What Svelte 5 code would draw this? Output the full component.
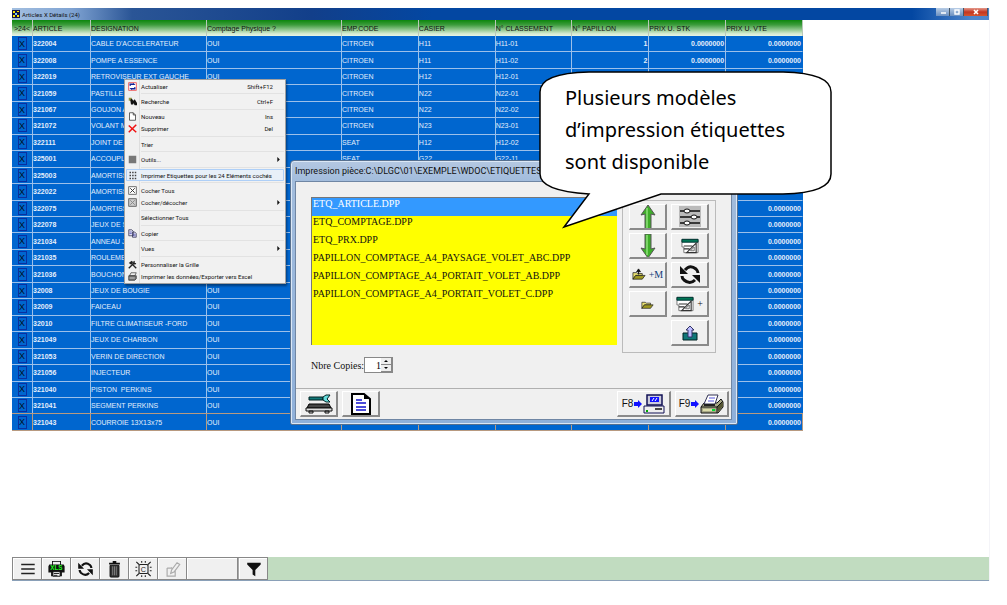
<script>
	let copies = 1;
	let selected = 'ETQ_ARTICLE.DPP';

	const columns = [
		'ARTICLE',
		'DESIGNATION',
		'Comptage Physique ?',
		'EMP.CODE',
		'CASIER',
		'N° CLASSEMENT',
		'N° PAPILLON',
		'PRIX U. STK',
		'PRIX U. VTE'
	];

	const zero = '0.0000000';

	// code, designation, emplacement, casier, classement, papillon, prix stk, prix vte
	const articles = [
		['322004', "CABLE D'ACCELERATEUR", 'CITROEN', 'H11', 'H11-01', '1', zero, zero],
		['322008', 'POMPE A ESSENCE', 'CITROEN', 'H11', 'H11-02', '2', zero, zero],
		['322019', 'RETROVISEUR EXT GAUCHE', 'CITROEN', 'H12', 'H12-01'],
		['321059', 'PASTILLE', 'CITROEN', 'N22', 'N22-01'],
		['321067', 'GOUJON A', 'CITROEN', 'N22', 'N22-02'],
		['321072', 'VOLANT M', 'CITROEN', 'N23', 'N23-01'],
		['322111', 'JOINT DE C', 'SEAT', 'H12', 'H12-02'],
		['325001', 'ACCOUPLE', 'SEAT', 'G22', 'G22-11'],
		['325003', 'AMORTISS'],
		['322022', 'AMORTISS'],
		['322075', 'AMORTISS', '', '', '', '', '', zero],
		['322078', 'JEUX DE S', '', '', '', '', '', zero],
		['321034', 'ANNEAU J', '', '', '', '', '', zero],
		['321035', 'ROULEME', '', '', '', '', '', zero],
		['321036', 'BOUCHON', '', '', '', '', '', zero],
		['32008', 'JEUX DE BOUGIE', '', '', '', '', '', zero],
		['32009', 'FAICEAU', '', '', '', '', '', zero],
		['32010', 'FILTRE CLIMATISEUR -FORD', '', '', '', '', '', zero],
		['321049', 'JEUX DE CHARBON', '', '', '', '', '', zero],
		['321053', 'VERIN DE DIRECTION', '', '', '', '', '', zero],
		['321056', 'INJECTEUR', '', '', '', '', '', zero],
		['321040', 'PISTON  PERKINS', '', '', '', '', '', zero],
		['321041', 'SEGMENT PERKINS', '', '', '', '', '', zero],
		['321043', 'COURROIE 13X13x75', '', '', '', '', '', zero]
	];

	const menu = [
		{ label: 'Actualiser', key: 'Shift+F12', icon: 'refresh', sep: true },
		{ label: 'Recherche', key: 'Ctrl+F', icon: 'find', sep: true },
		{ label: 'Nouveau', key: 'Ins', icon: 'new' },
		{ label: 'Supprimer', key: 'Del', icon: 'delete', sep: true },
		{ label: 'Trier', sep: true },
		{ label: 'Outils...', icon: 'tools', sub: true, sep: true },
		{ label: 'Imprimer Etiquettes pour les 24 Eléments cochés', icon: 'grid', active: true, sep: true },
		{ label: 'Cocher Tous', icon: 'check' },
		{ label: 'Cocher/décocher', icon: 'toggle', sub: true, sep: true },
		{ label: 'Sélectionner Tous', sep: true },
		{ label: 'Copier', icon: 'copy', sep: true },
		{ label: 'Vues', sub: true, sep: true },
		{ label: 'Personnaliser la Grille', icon: 'custom' },
		{ label: 'Imprimer les données/Exporter vers Excel', icon: 'print' }
	];

	const files = [
		'ETQ_ARTICLE.DPP',
		'ETQ_COMPTAGE.DPP',
		'ETQ_PRX.DPP',
		'PAPILLON_COMPTAGE_A4_PAYSAGE_VOLET_ABC.DPP',
		'PAPILLON_COMPTAGE_A4_PORTAIT_VOLET_AB.DPP',
		'PAPILLON_COMPTAGE_A4_PORTAIT_VOLET_C.DPP'
	];
</script>

{#snippet folder()}
	<path d="M1 4h4l1 1h5v2H4l-3 4z" fill="#e8e070" stroke="#222" stroke-width=".8" />
	<path d="M4 7h10l-3 4H1z" fill="#a09a20" stroke="#222" stroke-width=".8" />
{/snippet}

{#snippet design()}
	<path d="M1 1h17v14H3V9H1z" fill="#fff" stroke="#777" stroke-width="1" />
	<path d="M1 1h17v3H1z" fill="#075" stroke="#033" stroke-width="1" />
	<path d="M3 8h9M3 11h6M16 5v10H6z" fill="none" stroke="#333" stroke-width="1.2" />
	<path d="M14 9v4h-4z" fill="#eee" stroke="#555" stroke-width=".8" />
{/snippet}

{#snippet cycle()}
	<path d="M6 6q5-6 11-1 2 2 2 4M16 16q-5 5-11 0-2-2-2-4" fill="none" stroke="#111" stroke-width="3" />
	<path d="M1 2v8h8zM21 19v-8h-8z" fill="#111" />
{/snippet}

<main>
	<section class="window">
		<header class="titlebar">
			<svg class="app-icon" viewBox="0 0 8 8">
				<rect width="8" height="8" fill="#114" />
				<path d="M1 1h2v2H1zM5 1h2v1H5zM1 5h2v2H1zM5 5h2v2H5z" fill="#ffe600" />
				<path d="M3 3h2v2H3z" fill="#7cf" />
			</svg>
			<h1>Articles X Détails (24)</h1>
			<div class="win-buttons">
				<button aria-label="Réduire"><svg viewBox="0 0 8 6"><path d="M2 4h5" stroke="#fff" stroke-width="1.5" /></svg></button>
				<button aria-label="Agrandir"><svg viewBox="0 0 8 6"><path d="M2 1h4v4H2z" fill="none" stroke="#fff" stroke-width="1.4" /></svg></button>
				<button class="close" aria-label="Fermer"><svg viewBox="0 0 8 6"><path d="M2 1l4 4M6 1L2 5" stroke="#fff" stroke-width="1.6" /></svg></button>
			</div>
		</header>

		<table>
			<colgroup>
				<col class="c-check" /><col class="c-art" /><col class="c-des" /><col class="c-phy" />
				<col /><col /><col /><col /><col /><col />
			</colgroup>
			<thead>
				<tr>
					<th class="count">&gt;24&lt;</th>
					{#each columns as column}
						<th>{column}</th>
					{/each}
				</tr>
			</thead>
			<tbody>
				{#each articles as [code, name, emp, casier, rank, papillon, stk, vte] (code)}
					<tr>
						<td class="tick"><input type="checkbox" checked aria-label={code} /></td>
						<td><b>{code}</b></td>
						<td>{name}</td>
						<td>OUI</td>
						<td>{emp ?? ''}</td>
						<td>{casier ?? ''}</td>
						<td>{rank ?? ''}</td>
						<td class="num">{papillon ?? ''}</td>
						<td class="num">{stk ?? ''}</td>
						<td class="num">{vte ?? ''}</td>
					</tr>
				{/each}
			</tbody>
		</table>

		<footer class="toolbar">
			<div class="tools">
				<button aria-label="Menu"><svg viewBox="0 0 20 20"><path d="M3 5h15M3 10h15M3 15h15" stroke="#222" stroke-width="1.4" /></svg></button>
				<button aria-label="Export XLS">
					<svg viewBox="0 0 20 20">
						<path d="M5 1h10v4h3l1 2v7h-3v4H4v-4H1V7l1-2h3z" fill="#111" />
						<path d="M6 2h8v3H6z" fill="#eee" />
						<path d="M6 13h8v5H6z" fill="#fff" stroke="#111" /><path d="M7 15h6M7 17h4" stroke="#111" />
						<text x="3" y="11" font-size="7" font-weight="bold" fill="#2f2">XLS</text>
					</svg>
				</button>
				<button aria-label="Rafraîchir"><svg viewBox="-2 -1 26 23">{@render cycle()}</svg></button>
				<button aria-label="Supprimer">
					<svg viewBox="0 0 20 20">
						<path d="M5 6h10v12q0 1-1 1H6q-1 0-1-1z" fill="#333" stroke="#111" /><path d="M4 4h12M8 2h4" stroke="#111" stroke-width="2" />
						<path d="M8 7v10M10 7v10M12 7v10" stroke="#999" stroke-width=".8" />
					</svg>
				</button>
				<button aria-label="Code">
					<svg viewBox="0 0 20 20">
						<path d="M6 5h8l1 1v8l-1 1H6l-1-1V6zM2 2l3 3M18 2l-3 3M2 18l3-3M18 18l-3-3M8 1v2M12 1v2M8 17v2M12 17v2M1 8h2M1 12h2M17 8h2M17 12h2" fill="none" stroke="#222" stroke-width="1.2" />
						<text x="7" y="13" font-size="8" fill="#222">C</text>
					</svg>
				</button>
				<button aria-label="Modifier" disabled><svg viewBox="0 0 20 20"><path d="M4 9h5v-1M4 9v9h9v-6M8 15l1-4 6-8 3 2-6 8z" fill="none" stroke="#aaa" stroke-width="1.3" /></svg></button>
				<span class="blank"></span>
				<button class="filter" aria-label="Filtrer"><svg viewBox="0 0 20 20"><path d="M3 3h15v2l-6 6v7l-3-2v-5L3 5z" fill="#111" /></svg></button>
			</div>
		</footer>
	</section>

	<menu class="context">
		{#each menu as item (item.label)}
			<li class:active={item.active}>
				<button>
					<svg class="menu-icon" viewBox="0 0 12 12">
						{#if item.icon === 'refresh'}
							<rect x="1" y="1" width="10" height="10" fill="#fff" stroke="#e33" />
							<path d="M3 5V3h5M9 7v2H4" fill="none" stroke="#129" stroke-width="2" /><path d="M7 1l3 3H7zM5 11L2 8h3z" fill="#129" />
						{:else if item.icon === 'find'}
							<path d="M1 1h4v4H1z" fill="#994" />
							<path d="M3 4l2-2 2 3 2-2 3 5v3H9L7 8v2H4z" fill="#111" />
						{:else if item.icon === 'new'}
							<path d="M2 1h5l3 3v7H2zM7 1v3h3" fill="#fff" stroke="#333" />
						{:else if item.icon === 'delete'}
							<path d="M1 2l10 9M11 1L1 11" stroke="#f01010" stroke-width="2" />
						{:else if item.icon === 'tools'}
							<rect x="1" y="1" width="10" height="10" fill="#777" />
						{:else if item.icon === 'grid'}
							<path d="M2 2h9M2 6h9M2 10h9" stroke="#444" stroke-width="2" stroke-dasharray="2 1.5" />
						{:else if item.icon === 'check' || item.icon === 'toggle'}
							<rect x="1" y="1" width="10" height="10" fill={item.icon === 'check' ? '#fff' : '#ccc'} stroke="#444" />
							<path d="M3 3l6 6M9 3L3 9" stroke={item.icon === 'check' ? '#333' : '#888'} stroke-width="1.3" />
						{:else if item.icon === 'copy'}
							<path d="M1 1h4l2 2v6H1zM6 4h3l2 2v5H6z" fill="#dde" stroke="#335" /><path d="M2 4h3M2 6h3M7 7h3M7 9h3" stroke="#33a" stroke-width=".8" />
						{:else if item.icon === 'custom'}
							<path d="M1 11l7-7M3 3l8 8" stroke="#222" stroke-width="1.8" /><path d="M1 4l4-3 2 2-3 3zM7 2l2-1v3h2l-1 2H7z" fill="#222" />
						{:else if item.icon === 'print'}
							<path d="M4 1h7L9 5H2z" fill="#eee" stroke="#444" /><path d="M1 5h10v4l-2 2H1z" fill="#777" stroke="#333" /><path d="M2 8h7" stroke="#ddd" />
						{/if}
					</svg>
					<span class="label">{item.label}</span>
					{#if item.key}<kbd>{item.key}</kbd>{/if}
					{#if item.sub}<svg class="arrow" viewBox="0 0 4 6"><path d="M0 0l3 3-3 3z" fill="#111" /></svg>{/if}
				</button>
			</li>
			{#if item.sep}<li class="sep" role="separator"></li>{/if}
		{/each}
	</menu>

	<section class="dialog" aria-label="Impression">
		<h2>Impression pièce:C:\DLGC\01\EXEMPLE\WDOC\ETIQUETTES</h2>
		<div class="dialog-body">
			<div class="content">
				<div class="left">
					<div class="files" role="listbox" aria-label="Modèles">
						{#each files as file (file)}
							<button role="option" aria-selected={selected === file} class:selected={selected === file} on:click={() => (selected = file)}>{file}</button>
						{/each}
					</div>
					<div class="copies">
						<label for="copies">Nbre Copies:</label>
						<div class="spinner">
							<input id="copies" type="text" bind:value={copies} />
							<div class="spin">
								<button aria-label="Plus" on:click={() => copies++}><svg viewBox="0 0 6 4"><path d="M1 3l2-2 2 2z" /></svg></button>
								<button aria-label="Moins" on:click={() => copies--}><svg viewBox="0 0 6 4"><path d="M1 1l2 2 2-2z" /></svg></button>
							</div>
						</div>
					</div>
				</div>
				<div class="group">
					<button class="raised" aria-label="Monter"><svg width="16" height="26" viewBox="0 0 16 26"><path d="M8 1l7 10-4-1v15H5V10l-4 1z" fill="#3fae2a" stroke="#555" /><path d="M7 4v20" stroke="#8fe07a" stroke-width="1.5" /></svg></button>
					<button class="raised" aria-label="Réglages">
						<svg width="22" height="21" viewBox="0 0 22 21">
							<rect width="22" height="21" fill="#bbb" />
							<path d="M1 5h20M1 11h20M1 17h20" stroke="#111" stroke-width="1.5" />
							<ellipse cx="8" cy="5" rx="3" ry="2" fill="#fff" stroke="#111" /><ellipse cx="15" cy="11" rx="3" ry="2" fill="#fff" stroke="#111" /><ellipse cx="8" cy="17" rx="3" ry="2" fill="#fff" stroke="#111" />
						</svg>
					</button>
					<button class="raised" aria-label="Descendre"><svg width="16" height="26" viewBox="0 0 16 26"><path d="M8 25l7-10-4 1V1H5v15l-4-1z" fill="#3fae2a" stroke="#555" /><path d="M7 2v20" stroke="#8fe07a" stroke-width="1.5" /></svg></button>
					<button class="raised" aria-label="Modifier le modèle"><svg width="18" height="16" viewBox="0 0 19 16">{@render design()}</svg></button>
					<button class="raised"><svg width="14" height="13" viewBox="0 0 15 12">{@render folder()}<path d="M7 6V1M5 3l2-3 2 3z" fill="#111" stroke="#111" /></svg><span class="blue">+M</span></button>
					<button class="raised" aria-label="Rafraîchir"><svg width="22" height="21" viewBox="0 0 22 21">{@render cycle()}</svg></button>
					<button class="raised" aria-label="Ouvrir"><svg width="13" height="12" viewBox="0 0 15 12">{@render folder()}</svg></button>
					<button class="raised"><svg width="18" height="16" viewBox="0 0 19 16">{@render design()}</svg><span>+</span></button>
					<span></span>
					<button class="raised" aria-label="Exporter">
						<svg width="16" height="16" viewBox="0 0 16 16"><path d="M1 8h14v7H1z" fill="#177" stroke="#022" /><path d="M8 1l4 4h-2v7H6V5H4z" fill="#bbf" stroke="#336" /></svg>
					</button>
				</div>
			</div>
			<div class="actions">
				<button class="raised" aria-label="Configurer l'imprimante">
					<svg width="28" height="20" viewBox="0 0 28 20">
						<path d="M4 3h14v3H4z" fill="#177" stroke="#022" /><path d="M25 1h-4l-3 2v3l3 2h4l-3-3z" fill="#6dd" stroke="#022" />
						<path d="M4 10h20l2 4H2z" fill="#444" stroke="#000" /><path d="M1 14h26v3H1zM4 17h4v2H4zM20 17h4v2h-4z" fill="#ddd" stroke="#111" />
					</svg>
				</button>
				<button class="raised" aria-label="Aperçu du document">
					<svg width="22" height="22" viewBox="0 0 22 22">
						<path d="M2 1h12l6 5v15H2z" fill="#fff" stroke="#000" stroke-width="2" /><path d="M14 1v5h6z" />
						<path d="M6 7h6M6 10h10M6 14h10M6 17h10" stroke="#11c" stroke-width="1.5" />
					</svg>
				</button>
				<button class="raised wide first">
					<span>F8</span>
					<svg class="go" viewBox="0 0 8 8"><path d="M0 2h4V0l4 4-4 4V6H0z" fill="#11f" /></svg>
					<svg width="22" height="20" viewBox="0 0 22 20">
						<path d="M4 1h15v10H4z" fill="#ccd" stroke="#115" stroke-width="1.5" /><path d="M7 3h9v5H7z" fill="#11f" /><path d="M9 7l2-3M12 7l2-3" stroke="#fff" />
						<path d="M1 12h20v7H1z" fill="#eee" stroke="#115" /><path d="M12 15h7" stroke="#111" stroke-width="1.5" /><path d="M3 17h2" stroke="#0a0" stroke-width="2" />
					</svg>
				</button>
				<button class="raised wide">
					<span>F9</span>
					<svg class="go" viewBox="0 0 8 8"><path d="M0 2h4V0l4 4-4 4V6H0z" fill="#11f" /></svg>
					<svg width="24" height="20" viewBox="0 0 24 20">
						<path d="M4 9h13l4-4 2 3v5l-5 6H1v-6z" fill="#aa8" stroke="#111" /><path d="M17 13l6-6v5l-5 6z" fill="#553" /><path d="M8 1h10l-3 9H4z" fill="#fff" stroke="#335" /><path d="M9 4h6M8 7h6" stroke="#55d" />
						<path d="M1 13h16l6-6M17 13v6" fill="none" stroke="#111" /><path d="M4 11h11" stroke="#222" stroke-width="2" /><path d="M3 16h12" stroke="#dda" stroke-width="2" /><path d="M12 16h3" stroke="#0d3" stroke-width="2" />
					</svg>
				</button>
			</div>
		</div>
	</section>

	<aside class="callout">
		<svg viewBox="0 0 294 160">
			<path d="M50 2H244Q292 3 292 22V104Q292 123 244 124H122L25 157L50 124Q1 121 1 104V22Q1 3 50 2Z" fill="#fff" stroke="#000" stroke-width="1.5" />
		</svg>
		<p>Plusieurs modèles<br />d’impression étiquettes<br />sont disponible</p>
	</aside>
</main>

<style>
	:global(body) {
		margin: 0;
		background: #fff;
	}

	main {
		position: relative;
		box-sizing: border-box;
		min-height: 100vh;
		padding: 8px 18px 24px 12px;
		display: flex;
		overflow: hidden;
		font-family: 'Liberation Sans', Arial, sans-serif;
		font-size: 7px;
		color: #111;
	}

	button {
		margin: 0;
		padding: 0;
		border: 0;
		background: none;
		font: inherit;
		color: inherit;
	}

	svg {
		display: block;
		flex: none;
	}

	.window {
		flex: 1;
		display: flex;
		flex-direction: column;
		box-shadow: 1px 0 #f4f4f8;
	}

	.titlebar {
		display: flex;
		align-items: center;
		height: 12px;
		background: linear-gradient(90deg, #a3bfe0, #7fa3d2 60px, #2a5596 120px, #123f8a 300px, #0347a2 420px, #0347a2 900px, #4e85cb 960px);
	}

	.app-icon {
		width: 8px;
		height: 8px;
	}

	h1 {
		flex: 1;
		margin: 0 2px;
		font: 6px Roboto, 'Open Sans', sans-serif;
	}

	.win-buttons {
		display: flex;
		align-self: flex-start;
		margin-right: 1px;
	}

	.win-buttons button {
		display: flex;
		align-items: center;
		justify-content: center;
		width: 14px;
		height: 8px;
		border-right: 1px solid #456;
		background: linear-gradient(#b8cde6, #6a8fc0);
	}

	.win-buttons .close {
		width: 24px;
		background: linear-gradient(#e59a8c, #c33520 50%, #d4552f);
	}

	.win-buttons svg {
		width: 8px;
		height: 6px;
	}

	table {
		width: 791px;
		height: 411px;
		table-layout: fixed;
		border-collapse: separate;
		border-spacing: 0;
	}

	.c-check {
		width: 21px;
	}

	.c-art {
		width: 58px;
	}

	.c-des {
		width: 116px;
	}

	.c-phy {
		width: 135px;
	}

	th,
	td {
		overflow: hidden;
		padding: 1px 1px 0 0;
		text-align: left;
		white-space: pre;
		line-height: 8px;
	}

	th {
		height: 15px;
		border-right: 1px solid #b9c9b9;
		background: linear-gradient(#0c860c, #3c9c3c 30%, #d4ead0 85%, #e8f4e4);
		font-weight: normal;
	}

	.count {
		padding: 1px 0 0;
		text-align: center;
	}

	td {
		border-right: 1px solid #9cc0ea;
		border-bottom: 1px solid #9cc0ea;
		background: #0066cf;
		color: #e4eefb;
	}

	td:last-child {
		border-right-color: #0066cf;
	}

	tr:last-child td {
		border-color: #b89a80;
		box-shadow: 0 -1px #b89a80;
	}

	.num {
		text-align: right;
		font-weight: bold;
	}

	.tick {
		padding: 0;
		text-align: center;
	}

	.tick input {
		appearance: none;
		display: flex;
		align-items: center;
		justify-content: center;
		box-sizing: border-box;
		width: 9px;
		height: 13px;
		margin: 0 auto;
		border: 1px solid #0a2fa0;
	}

	.tick input:checked::before {
		content: 'X';
		color: #012;
		font-size: 9px;
	}

	.toolbar {
		display: flex;
		margin-top: auto;
		height: 23px;
		border-bottom: 1px solid #8aa0b8;
		background: #c1dcc0;
	}

	.tools {
		display: flex;
		box-sizing: border-box;
		width: 256px;
		border: 1px solid #888;
		background: #f0f0f0;
	}

	.tools button,
	.blank {
		display: flex;
		align-items: center;
		justify-content: center;
		box-sizing: border-box;
		width: 29px;
		border-right: 1px solid #888;
		box-shadow: inset 1px 1px #fff;
	}

	.tools svg {
		width: 19px;
		height: 18px;
	}

	.tools .blank {
		flex: 1;
	}

	.tools .filter {
		border-right: 0;
		border-left: 1px solid #aaa;
	}

	.context {
		position: absolute;
		left: 124px;
		top: 79px;
		display: flex;
		flex-direction: column;
		box-sizing: border-box;
		width: 162px;
		height: 205px;
		margin: 0;
		padding: 0 1px 1px;
		border: 1px solid #a0a0a0;
		background: linear-gradient(90deg, #f0f0f0 14px, #ddd 14px, #ddd 15px, #f1f1f1 15px);
		box-shadow: 1px 2px 2px #0006;
		list-style: none;
		font-family: Roboto, 'Open Sans', sans-serif;
		font-size: 6px;
	}

	.context li {
		height: 12px;
	}

	.context .sep {
		flex: 1;
		height: auto;
		margin-left: 15px;
		background: linear-gradient(#e2e2e2, #e2e2e2) center / 100% 1px no-repeat;
	}

	.context button {
		display: flex;
		align-items: center;
		width: 100%;
		height: 12px;
		padding: 0 3px 0 2px;
		text-align: left;
	}

	.context .active {
		border-radius: 1px;
		box-shadow: inset 0 0 0 1px #aecff7;
		background: #e8f0f8;
	}

	.menu-icon {
		width: 9px;
		height: 9px;
	}

	.label {
		flex: 1;
		margin-left: 4px;
		white-space: nowrap;
	}

	kbd {
		margin-right: 8px;
		font: inherit;
	}

	.arrow {
		width: 4px;
		height: 5px;
	}

	.dialog {
		position: absolute;
		left: 290px;
		top: 160px;
		box-sizing: border-box;
		width: 448px;
		padding: 0 5px 4px 4px;
		border: 1px solid #57708f;
		border-radius: 4px 4px 2px 2px;
		background: linear-gradient(#b4c8e2, #a2bcdc 20px, #8fb0da);
		box-shadow: inset 0 0 0 1px #dce8f6;
	}

	h2 {
		margin: 0;
		font: 9px / 20px Roboto, 'Open Sans', sans-serif;
		white-space: nowrap;
	}

	.dialog-body {
		border: 1px solid #6f86a4;
		background: #f0f0f0;
		font-family: 'Liberation Serif', 'Times New Roman', serif;
		font-size: 10px;
	}

	.content {
		display: flex;
		gap: 5px;
		padding: 15px;
		height: 176px;
		border-bottom: 1px solid #b0b0b0;
	}

	.left {
		flex: 1;
	}

	.files {
		display: flex;
		flex-direction: column;
		box-sizing: border-box;
		height: 148px;
		border-top: 1px solid #777;
		border-left: 1px solid #777;
		background: #ff0;
	}

	.files button {
		height: 18px;
		padding: 0 0 6px 1px;
		text-align: left;
		line-height: 12px;
	}

	.files .selected {
		background: #3399ff;
		color: #fff;
	}

	.copies {
		display: flex;
		align-items: center;
		margin-top: 12px;
	}

	.spinner {
		display: flex;
		box-sizing: border-box;
		width: 29px;
		height: 16px;
		border: 1px solid #888;
		background: #fff;
	}

	.spinner input {
		flex: 1;
		min-width: 0;
		padding: 0;
		border: 0;
		background: none;
		font: inherit;
		text-align: right;
	}

	.spin {
		display: flex;
		flex-direction: column;
		width: 11px;
	}

	.spin button {
		flex: 1;
		display: flex;
		align-items: center;
		justify-content: center;
		border-right: 1px solid #888;
		border-bottom: 1px solid #888;
		background: #eee;
	}

	.spin svg {
		width: 6px;
		height: 4px;
	}

	.group {
		display: grid;
		grid-template-columns: 38px 38px;
		grid-auto-rows: 26px;
		gap: 3px 4px;
		justify-content: center;
		align-self: flex-start;
		margin-top: 3px;
		padding: 3px 6px 6px;
		border: 1px solid #bbb;
	}

	.raised {
		display: flex;
		align-items: center;
		justify-content: center;
		gap: 3px;
		box-sizing: border-box;
		overflow: hidden;
		width: 38px;
		height: 26px;
		border: 1px solid #fff;
		border-right: 2px solid #8a8a8a;
		border-bottom: 2px solid #8a8a8a;
		background: #f0f0f0;
	}

	.blue {
		color: #123a78;
	}

	.actions {
		display: flex;
		gap: 4px;
		padding: 2px 2px 2px 4px;
	}

	.wide {
		gap: 1px;
		width: 54px;
		font-family: 'Liberation Sans', Arial, sans-serif;
	}

	.first {
		margin-left: auto;
	}

	.go {
		width: 8px;
		height: 8px;
	}

	.callout {
		position: absolute;
		left: 539px;
		top: 70px;
		width: 294px;
		height: 160px;
	}

	.callout svg {
		position: absolute;
		inset: 0;
	}

	.callout p {
		position: relative;
		margin: 0;
		padding: 12px 0 0 26px;
		font: 20px / 32px 'Noto Sans', 'Open Sans', sans-serif;
		color: #000;
	}
</style>
